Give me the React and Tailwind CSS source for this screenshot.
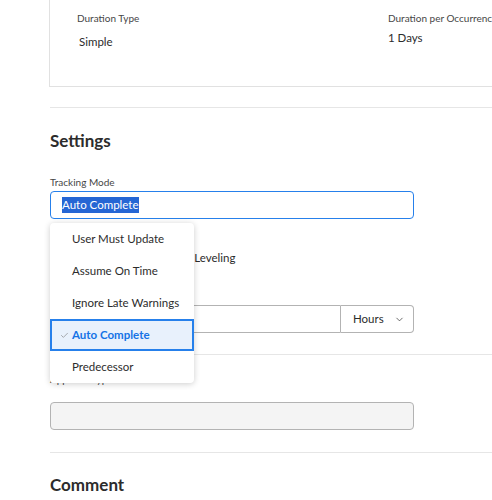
import { Check, ChevronDown } from 'lucide-react'

const options = ['User Must Update', 'Assume On Time', 'Ignore Late Warnings', 'Auto Complete', 'Predecessor']

export default function App() {
  return (
    <div
      className="relative h-[500px] w-[492px] overflow-hidden bg-white text-[#2c2c2c]"
      style={{ fontFamily: 'Lato, "Open Sans", sans-serif' }}
    >
      {/* overview card, top cut off */}
      <div className="ml-[49px] -mt-[20px] h-[107px] w-[520px] border border-[#e1e1e1] bg-white">
        <div className="flex pt-[30px]">
          <div className="ml-[27px] w-[311px]">
            <div className="text-[10px] leading-[14px] text-[#464646]">Duration Type</div>
            <div className="ml-[2px] mt-[9px] text-[11.5px] leading-[16px] text-[#2c2c2c]">Simple</div>
          </div>
          <div>
            <div className="whitespace-nowrap text-[10px] leading-[14px] text-[#464646]">Duration per Occurrence</div>
            <div className="mt-[5px] text-[11.5px] leading-[16px] text-[#2c2c2c]">1 Days</div>
          </div>
        </div>
      </div>

      <div className="ml-[50px] mt-[20px] border-t border-[#e6e6e6]" />

      <section className="ml-[50px]">
        <h2 className="mt-[22px] text-[17px] font-bold leading-[22px] text-[#2c2c2c]">Settings</h2>

        <div className="mt-[23px] text-[10px] leading-[14px] text-[#464646]">Tracking Mode</div>
        <div className="mt-[2px] flex h-[28px] w-[364px] items-center rounded-[4px] border border-[#2680eb] px-[11px]">
          <span className="bg-[#2566d4] text-[11.5px] leading-[16px] text-white">Auto Complete</span>
        </div>

        <div className="mt-[31px] flex items-center gap-[12px]">
          <span className="h-[14px] w-[14px] rounded-[2px] border-2 border-[#6e6e6e]" />
          <span className="text-[11.5px] leading-[16px] text-[#2c2c2c]">Exclude from Resource Leveling</span>
        </div>

        <div className="mt-[22px] text-[10px] leading-[14px] text-[#464646]">Planned Hours</div>
        <div className="mt-[3px] flex h-[28px] w-[364px]">
          <div className="flex-1 rounded-l-[4px] border border-[#b3b3b3]" />
          <div className="flex w-[73px] items-center gap-[10px] rounded-r-[4px] border border-l-0 border-[#b3b3b3] pl-[12px] text-[11.5px] text-[#2c2c2c]">
            Hours
            <ChevronDown size={11} strokeWidth={1.5} />
          </div>
        </div>
      </section>

      <div className="ml-[50px] mt-[21px] border-t border-[#e6e6e6]" />

      <section className="ml-[50px]">
        <div className="mt-[17px] text-[10px] leading-[14px] text-[#464646]">Approval Type</div>
        <div className="mt-[16px] h-[28px] w-[364px] rounded-[4px] border border-[#b3b3b3] bg-[#f4f4f4]" />
      </section>

      <div className="ml-[50px] mt-[22px] border-t border-[#e6e6e6]" />

      <h2 className="ml-[50px] mt-[21px] text-[17px] font-bold leading-[22px] text-[#2c2c2c]">Comment</h2>

      {/* open dropdown */}
      <ul className="absolute left-[50px] top-[223px] w-[144px] rounded-[4px] bg-white shadow-[0_1px_6px_rgba(0,0,0,0.2)]">
        {options.map((o) => {
          const sel = o === 'Auto Complete'
          return (
            <li
              key={o}
              className={
                sel
                  ? 'relative flex h-[32px] items-center border-2 border-[#2680eb] bg-[#e8f1fc] pl-[20px] text-[11.5px] font-bold text-[#1473e6]'
                  : 'flex h-[32px] items-center pl-[22px] text-[11.5px] text-[#2c2c2c]'
              }
            >
              {sel && <Check size={9} strokeWidth={1.5} className="absolute left-[8px] text-[#6e6e6e]" />}
              {o}
            </li>
          )
        })}
      </ul>
    </div>
  )
}
